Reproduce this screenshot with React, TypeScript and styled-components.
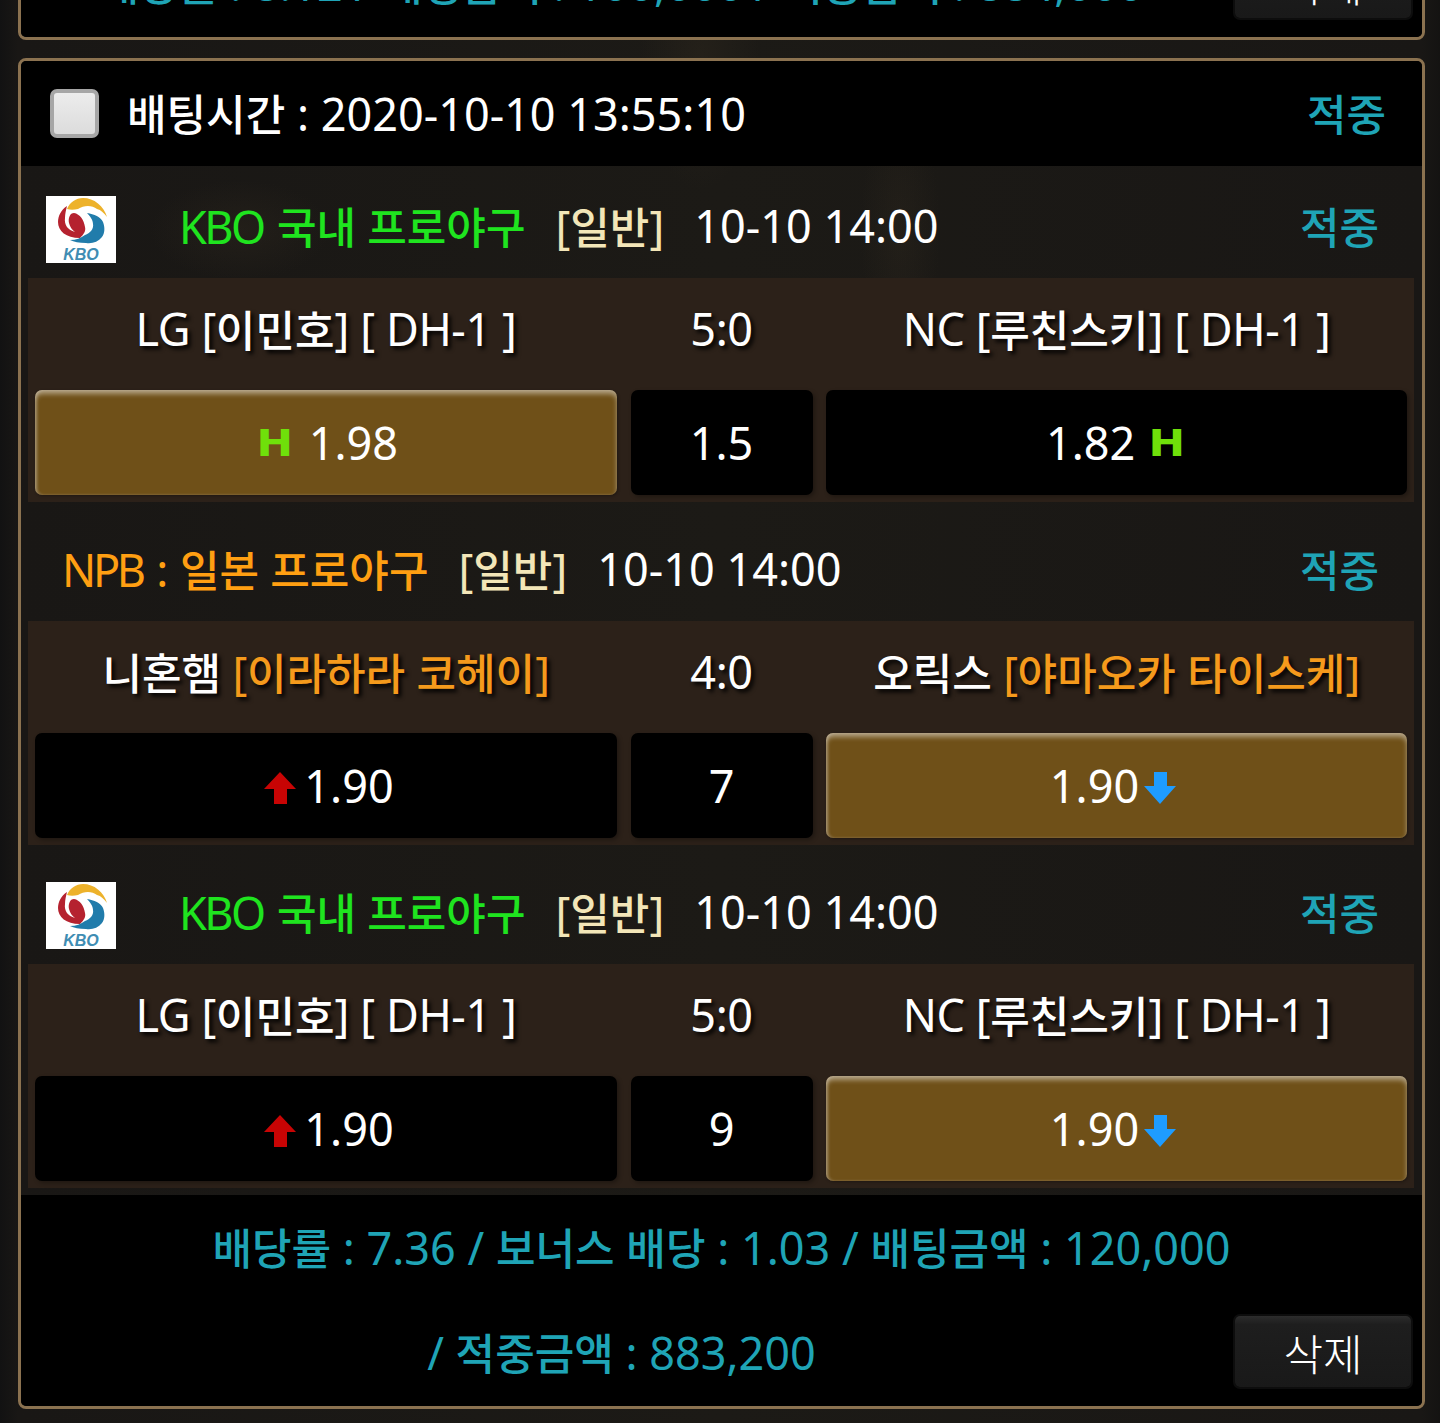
import React from "react";
import styled, { createGlobalStyle } from "styled-components";

const Global = createGlobalStyle`
  html, body { margin: 0; padding: 0; background: #141312; }
  body { font-family: "Noto Sans", "Noto Sans CJK KR", sans-serif; color: #fff; }
`;

const Page = styled.div`
  width: 1440px;
  height: 1423px;
  overflow: hidden;
  box-sizing: border-box;
  background-color: #191715;
  background-image:
    radial-gradient(ellipse 60px 130px at 700px 60px, rgba(70, 58, 40, 0.2), transparent),
    radial-gradient(ellipse 90px 50px at 240px 230px, rgba(70, 58, 40, 0.2), transparent),
    radial-gradient(ellipse 40px 120px at 900px 230px, rgba(70, 58, 40, 0.18), transparent),
    linear-gradient(90deg, #121212 0, #191715 18px, #1c1a16 50%, #191715 1422px, #141312 1440px);
`;

const Stack = styled.div`
  display: flex;
  flex-direction: column;
  gap: 18px;
  margin: -72px 15px 0 18px;
`;

const Card = styled.section`
  border: 3px solid #8b7250;
  border-radius: 8px;
  overflow: hidden;
`;

const Roman = styled.span`
  font-size: 45px;
  font-weight: 450;
`;

const Narrow = styled.span<{ $track: number; $gap: number }>`
  font-size: 45px;
  font-weight: 450;
  letter-spacing: ${(p) => p.$track}px;
  margin-right: ${(p) => p.$gap}px;
`;

const Mixed = ({ children }: { children: string }) => (
  <>
    {children.split(/([^\uAC00-\uD7A3]+)/).map((part, i) =>
      i % 2 ? <Roman key={i}>{part}</Roman> : part
    )}
  </>
);

const Header = styled.header`
  height: 105px;
  box-sizing: border-box;
  background: #000;
  display: flex;
  align-items: center;
  padding: 0 36px 2px 29px;
  font-size: 43px;
  font-weight: 500;
  white-space: pre;
`;

const CheckBox = styled.span`
  width: 49px;
  height: 49px;
  box-sizing: border-box;
  border: 4px solid #a6a6a6;
  border-radius: 7px;
  background: linear-gradient(#ececec, #dcdcdc);
  margin: 2px 28px 0 0;
`;

const HeaderText = styled.span`
  flex: 1;
`;

const Hit = styled.span`
  color: #1fa4b6;
  font-size: 43px;
  font-weight: 500;
`;

const League = styled.div<{ $logo?: boolean }>`
  height: 112px;
  box-sizing: border-box;
  padding: 6px 43px 0 ${(p) => (p.$logo ? 25 : 43)}px;
  display: flex;
  align-items: center;
  font-size: 43px;
  font-weight: 500;
  white-space: pre;
`;

const Logo = styled.div`
  width: 70px;
  height: 67px;
  background: #fff;
  margin: 9px 65px 0 0;
  position: relative;
  flex: none;
  overflow: hidden;
`;

const LogoLabel = styled.span`
  position: absolute;
  bottom: 1px;
  left: 0;
  right: 0;
  text-align: center;
  color: #3f8db3;
  font: italic 700 16px/15px "Liberation Sans", sans-serif;
`;

const LeagueName = styled.span<{ $color: string }>`
  color: ${(p) => p.$color};
  margin-left: -2px;
  margin-right: 30px;
`;

const Tag = styled.span`
  color: #f3e6b8;
  margin-right: 30px;
`;

const Time = styled.span`
  flex: 1;
`;

const Match = styled.div`
  background: #2c2119;
  margin: 0 8px 7px 7px;
  padding: 0 7px 7px;
  display: grid;
  grid-template-columns: 582px 182px 1fr;
  grid-template-rows: 112px 105px;
  column-gap: 13.5px;
`;

const Team = styled.div`
  display: flex;
  align-items: center;
  justify-content: center;
  padding-bottom: 12px;
  font-size: 43px;
  font-weight: 500;
  white-space: pre;
  text-shadow: 3px 3px 4px #000;

  ${Roman} {
    letter-spacing: -0.4px;
  }
`;

const Pitcher = styled.span`
  color: #f59a1c;
`;

const Odd = styled.div<{ $on?: boolean; $shift?: number }>`
  display: flex;
  align-items: center;
  justify-content: center;
  box-sizing: border-box;
  padding-left: ${(p) => Math.max(p.$shift ?? 0, 0)}px;
  padding-right: ${(p) => Math.max(-(p.$shift ?? 0), 0)}px;
  border-radius: 7px;
  font-size: 45px;
  font-weight: 450;
  background: ${(p) => (p.$on ? "#6f5018" : "#000")};
  box-shadow: ${(p) =>
    p.$on
      ? "inset 0 4px 5px rgba(255,255,255,0.45), inset 2px 0 3px rgba(255,255,255,0.2), 1px 1px 3px rgba(0,0,0,0.3)"
      : "2px 2px 4px rgba(0,0,0,0.3)"};
`;

const HMark = styled.span<{ $side: "left" | "right" }>`
  display: inline-block;
  color: #6fe00a;
  font: 700 38px/1 "DejaVu Sans", sans-serif;
  transform: scaleX(1.15);
  ${(p) => (p.$side === "left" ? "margin-right: 18px;" : "margin-left: 16px;")}
`;

const Arrow = styled.svg<{ $side: "left" | "right" }>`
  width: 34px;
  height: 34px;
  flex: none;
  margin-top: 4px;
  ${(p) => (p.$side === "left" ? "margin-right: 7px;" : "margin-left: 4px;")}
`;

const Footer = styled.footer`
  background: #000;
  color: #1fa4b6;
  font-size: 43px;
  font-weight: 500;
  white-space: pre;
`;

const Line = styled.div`
  height: 105px;
  box-sizing: border-box;
  display: flex;
  align-items: center;
  justify-content: center;
  padding-bottom: 2px;
`;

const LastLine = styled.div`
  height: 106px;
  box-sizing: border-box;
  display: flex;
  align-items: center;
  padding: 0 11px 3px 0;
`;

const LastText = styled.div`
  flex: 1;
  text-align: center;
`;

const DeleteButton = styled.button`
  width: 176px;
  height: 71px;
  margin-left: 13px;
  padding: 0;
  border: 0;
  border-radius: 5px;
  background: linear-gradient(#2c2c2c 0, #1e1e1e 12%, #191919 100%);
  box-shadow: 0 0 0 2px #0d0d0d;
  color: #fff;
  font: 300 43px "Noto Sans CJK KR", "Noto Sans", sans-serif;
`;

function KboLogo() {
  return (
    <Logo>
      <svg width="70" height="52" viewBox="0 0 70 52" aria-hidden="true">
        <path d="M21 13C24 6 30 2 37 2C48 2 58 10 61 21C58 17 55 14 51 13C46 9 38 9 32 13C28 14 24 14 21 13Z" fill="#edb22b" />
        <path d="M21 10C15 14 12 20 12 26C12 35 20 42 34 42C38 38 40 35 39 31C38 24 34 18 28 17C24 17 22 22 23 27C24 31 26 34 29 36C22 34 18 29 19 22C19 18 20 14 21 10Z" fill="#b5222f" />
        <path d="M41 17C48 18 55 21 57 26C59 31 59 37 56 41C52 46 46 48 40 47C33 47 28 46 24 44C30 44 35 42 39 39C44 37 48 33 47 28C47 24 44 20 41 17Z" fill="#217cab" />
      </svg>
      <LogoLabel>KBO</LogoLabel>
    </Logo>
  );
}

function Up() {
  return (
    <Arrow $side="left" viewBox="0 0 34 34" aria-hidden="true">
      <path d="M17 1L33 18H24V33H11V18H1Z" fill="#c80404" />
    </Arrow>
  );
}

function Down() {
  return (
    <Arrow $side="right" viewBox="0 0 34 34" aria-hidden="true">
      <path d="M11 1H24V15H33L17 33L1 15H11Z" fill="#1e9cff" />
    </Arrow>
  );
}

function Kbo() {
  return (
    <League $logo>
      <KboLogo />
      <LeagueName $color="#1fe41f">
        <Narrow $track={-2.5} $gap={4}>KBO </Narrow>국내 프로야구
      </LeagueName>
      <Tag><Mixed>[일반]</Mixed></Tag>
      <Time><Roman>10-10 14:00</Roman></Time>
      <Hit>적중</Hit>
    </League>
  );
}

export default function App() {
  return (
    <Page>
      <Global />
      <Stack>
        <Card>
          <Footer>
            <LastLine>
              <LastText><Mixed>배당률 : 8.12 / 배팅금액 : 100,000 / 적중금액 : 884,000</Mixed></LastText>
              <DeleteButton>삭제</DeleteButton>
            </LastLine>
          </Footer>
        </Card>
        <Card>
          <Header>
            <CheckBox />
            <HeaderText><Mixed>배팅시간 : 2020-10-10 13:55:10</Mixed></HeaderText>
            <Hit>적중</Hit>
          </Header>
          <Kbo />
          <Match>
            <Team><Mixed>LG [이민호] [ DH-1 ]</Mixed></Team>
            <Team><Roman>5:0</Roman></Team>
            <Team><Mixed>NC [루친스키] [ DH-1 ]</Mixed></Team>
            <Odd $on $shift={5}>
              <HMark $side="left">H</HMark>1.98
            </Odd>
            <Odd>1.5</Odd>
            <Odd $shift={-4}>
              1.82<HMark $side="right">H</HMark>
            </Odd>
          </Match>
          <League>
            <LeagueName $color="#ff9f12">
              <Narrow $track={-3.3} $gap={5}>NPB </Narrow><Roman>: </Roman>일본 프로야구
            </LeagueName>
            <Tag><Mixed>[일반]</Mixed></Tag>
            <Time><Roman>10-10 14:00</Roman></Time>
            <Hit>적중</Hit>
          </League>
          <Match>
            <Team>
              <Mixed>니혼햄 </Mixed><Pitcher><Mixed>[이라하라 코헤이]</Mixed></Pitcher>
            </Team>
            <Team><Roman>4:0</Roman></Team>
            <Team>
              <Mixed>오릭스 </Mixed><Pitcher><Mixed>[야마오카 타이스케]</Mixed></Pitcher>
            </Team>
            <Odd $shift={5}>
              <Up />
              1.90
            </Odd>
            <Odd>7</Odd>
            <Odd $on $shift={-6}>
              1.90
              <Down />
            </Odd>
          </Match>
          <Kbo />
          <Match>
            <Team><Mixed>LG [이민호] [ DH-1 ]</Mixed></Team>
            <Team><Roman>5:0</Roman></Team>
            <Team><Mixed>NC [루친스키] [ DH-1 ]</Mixed></Team>
            <Odd $shift={5}>
              <Up />
              1.90
            </Odd>
            <Odd>9</Odd>
            <Odd $on $shift={-6}>
              1.90
              <Down />
            </Odd>
          </Match>
          <Footer>
            <Line><span><Mixed>배당률 : 7.36 / 보너스 배당 : 1.03 / 배팅금액 : 120,000</Mixed></span></Line>
            <LastLine>
              <LastText><Mixed>/ 적중금액 : 883,200</Mixed></LastText>
              <DeleteButton>삭제</DeleteButton>
            </LastLine>
          </Footer>
        </Card>
      </Stack>
    </Page>
  );
}
